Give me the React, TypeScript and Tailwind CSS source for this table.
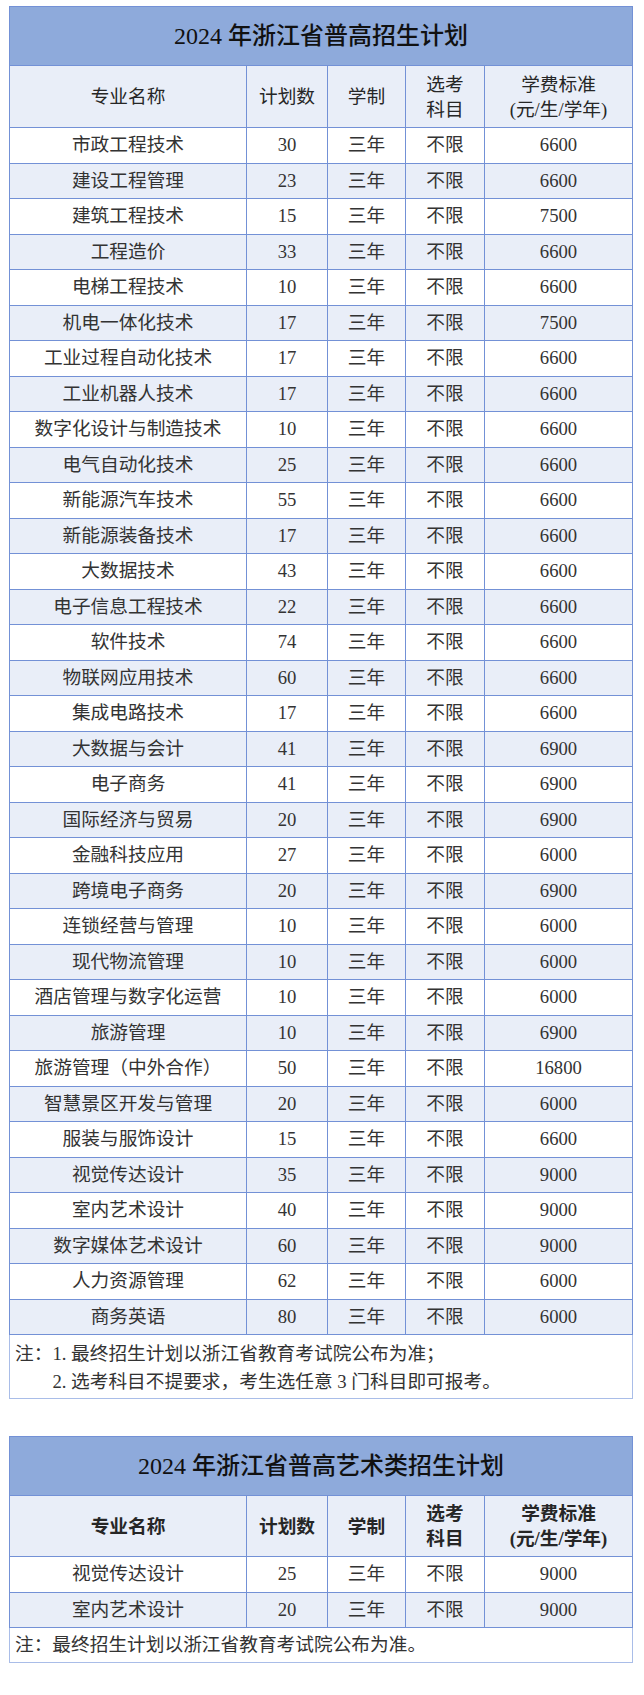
import React from 'react';

type Row = [string, string, string];

const plan: Row[] = [
  ['市政工程技术', '30', '6600'],
  ['建设工程管理', '23', '6600'],
  ['建筑工程技术', '15', '7500'],
  ['工程造价', '33', '6600'],
  ['电梯工程技术', '10', '6600'],
  ['机电一体化技术', '17', '7500'],
  ['工业过程自动化技术', '17', '6600'],
  ['工业机器人技术', '17', '6600'],
  ['数字化设计与制造技术', '10', '6600'],
  ['电气自动化技术', '25', '6600'],
  ['新能源汽车技术', '55', '6600'],
  ['新能源装备技术', '17', '6600'],
  ['大数据技术', '43', '6600'],
  ['电子信息工程技术', '22', '6600'],
  ['软件技术', '74', '6600'],
  ['物联网应用技术', '60', '6600'],
  ['集成电路技术', '17', '6600'],
  ['大数据与会计', '41', '6900'],
  ['电子商务', '41', '6900'],
  ['国际经济与贸易', '20', '6900'],
  ['金融科技应用', '27', '6000'],
  ['跨境电子商务', '20', '6900'],
  ['连锁经营与管理', '10', '6000'],
  ['现代物流管理', '10', '6000'],
  ['酒店管理与数字化运营', '10', '6000'],
  ['旅游管理', '10', '6900'],
  ['旅游管理（中外合作）', '50', '16800'],
  ['智慧景区开发与管理', '20', '6000'],
  ['服装与服饰设计', '15', '6600'],
  ['视觉传达设计', '35', '9000'],
  ['室内艺术设计', '40', '9000'],
  ['数字媒体艺术设计', '60', '9000'],
  ['人力资源管理', '62', '6000'],
  ['商务英语', '80', '6000'],
];

const artPlan: Row[] = [
  ['视觉传达设计', '25', '9000'],
  ['室内艺术设计', '20', '9000'],
];

const grid = 'grid grid-cols-[237px_81px_78px_79px_1fr]';
const cell = 'flex items-center justify-center border-r border-[#7391d6]';

function Title({ text }: { text: string }) {
  return (
    <div className="h-[60px] flex items-center justify-center bg-[#8eaadb] border border-[#7391d6] text-[24px] text-[#111] font-medium">
      {text}
    </div>
  );
}

function Header({ bold, tall }: { bold?: boolean; tall?: boolean }) {
  return (
    <div
      className={`${grid} ${tall ? 'h-[62px]' : 'h-[61px]'} bg-[#e9eef8] border-x border-b border-[#7391d6] text-[#262626] leading-[25px] ${
        bold ? 'font-bold' : ''
      }`}
    >
      <div className={cell}>专业名称</div>
      <div className={cell}>计划数</div>
      <div className={cell}>学制</div>
      <div className={`${cell} flex-col`}>
        <span>选考</span>
        <span>科目</span>
      </div>
      <div className="flex flex-col items-center justify-center">
        <span>学费标准</span>
        <span>(元/生/学年)</span>
      </div>
    </div>
  );
}

function DataRows({ rows }: { rows: Row[] }) {
  return (
    <>
      {rows.map(([name, count, fee], i) => (
        <div
          key={name + i}
          className={`${grid} h-[35.5px] border-x border-b border-[#7391d6] text-[#333] ${
            i % 2 === 1 ? 'bg-[#e9eef8]' : 'bg-white'
          }`}
        >
          <div className={cell}>{name}</div>
          <div className={cell}>{count}</div>
          <div className={cell}>三年</div>
          <div className={cell}>不限</div>
          <div className="flex items-center justify-center">{fee}</div>
        </div>
      ))}
    </>
  );
}

export default function App() {
  return (
    <div className="min-h-[1695px] bg-white pt-[6px] pl-[9px] font-['Liberation_Serif','Noto_Sans_CJK_SC',serif] text-[18.7px]">
      <div className="w-[624px]">
        <Title text="2024 年浙江省普高招生计划" />
        <Header tall />
        <DataRows rows={plan} />
        <div className="h-[64px] flex pt-[5px] pl-[5px] leading-[28px] text-[#333] bg-white border-x border-b border-[#a9bde8]">
          <span>注：</span>
          <div className="flex flex-col">
            <span>1. 最终招生计划以浙江省教育考试院公布为准；</span>
            <span>2. 选考科目不提要求，考生选任意 3 门科目即可报考。</span>
          </div>
        </div>

        <div className="h-[37px]" />

        <Title text="2024 年浙江省普高艺术类招生计划" />
        <Header bold />
        <DataRows rows={artPlan} />
        <div className="h-[35px] flex items-center pl-[5px] text-[#333] bg-white border-x border-b border-[#a9bde8]">
          注：最终招生计划以浙江省教育考试院公布为准。
        </div>
      </div>
    </div>
  );
}
